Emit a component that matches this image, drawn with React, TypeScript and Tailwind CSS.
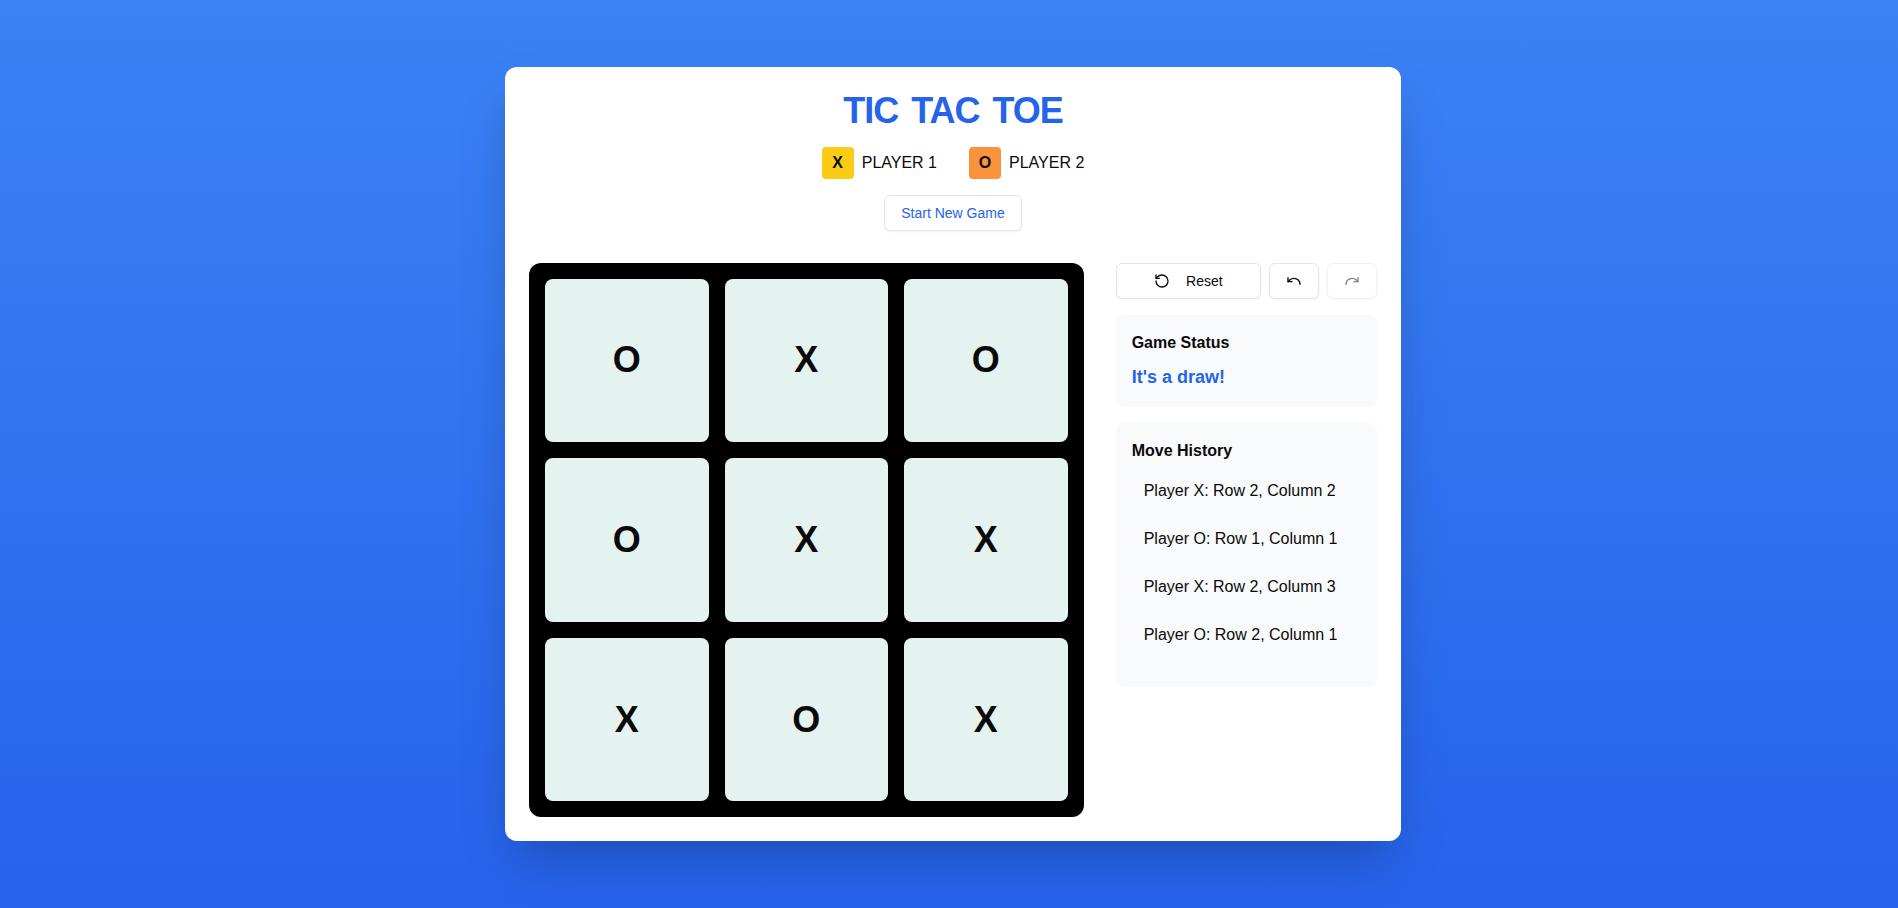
import { RotateCcw, Undo, Redo } from 'lucide-react';

const board = ['O', 'X', 'O', 'O', 'X', 'X', 'X', 'O', 'X'];
const moves = [
  'Player X: Row 2, Column 2',
  'Player O: Row 1, Column 1',
  'Player X: Row 2, Column 3',
  'Player O: Row 2, Column 1',
];

const button =
  'inline-flex items-center justify-center rounded-md border border-[#e5e5e5] bg-white text-sm font-medium shadow-xs h-9 px-4';

function Player({ mark, name, color }: { mark: string; name: string; color: string }) {
  return (
    <div className="flex items-center gap-2">
      <div className={`flex h-8 w-8 items-center justify-center rounded font-bold ${color}`}>{mark}</div>
      <span>{name}</span>
    </div>
  );
}

export default function App() {
  return (
    <div className="flex h-[908px] items-center justify-center bg-linear-to-b/srgb from-[#3b82f6] to-[#2563eb] py-4 pr-4 pl-6 font-['Liberation_Sans',Arial,sans-serif] text-[#0a0a0a]">
      <main className="w-[896px] rounded-xl bg-white p-6 shadow-2xl">
        <header className="mb-8 flex flex-col items-center">
          <h1 className="mb-4 text-4xl font-bold tracking-[-1px] text-[#2563eb] [word-spacing:4px]">TIC TAC TOE</h1>
          <div className="mb-4 flex gap-8">
            <Player mark="X" name="PLAYER 1" color="bg-[#facc15]" />
            <Player mark="O" name="PLAYER 2" color="bg-[#fb923c]" />
          </div>
          <button className={`${button} text-[#2563eb]`}>Start New Game</button>
        </header>
        <div className="grid grid-cols-3 items-start gap-8">
          <div className="col-span-2 grid aspect-square grid-cols-3 grid-rows-3 gap-4 rounded-xl bg-black p-4">
            {board.map((mark, i) => (
              <button key={i} className="flex items-center justify-center rounded-lg bg-[#e5f3f0] text-4xl font-bold">
                {mark}
              </button>
            ))}
          </div>
          <aside className="space-y-4">
            <div className="flex gap-2">
              <button className={`${button} flex-1`}>
                <RotateCcw className="mr-4 h-4 w-4" />
                Reset
              </button>
              <button className={button} aria-label="Undo">
                <Undo className="h-4 w-4" />
              </button>
              <button className={`${button} opacity-50`} aria-label="Redo" disabled>
                <Redo className="h-4 w-4" />
              </button>
            </div>
            <section className="rounded-lg bg-[#f9fafb] p-4">
              <h2 className="mb-2 font-semibold">Game Status</h2>
              <p className="text-lg font-bold text-[#2563eb]">It's a draw!</p>
            </section>
            <section className="rounded-lg bg-[#f9fafb] p-4">
              <h2 className="mb-2 font-semibold">Move History</h2>
              <ul className="h-[200px] space-y-2 overflow-hidden">
                {moves.map((move) => (
                  <li key={move} className="px-3 py-2">{move}</li>
                ))}
              </ul>
            </section>
          </aside>
        </div>
      </main>
    </div>
  );
}
